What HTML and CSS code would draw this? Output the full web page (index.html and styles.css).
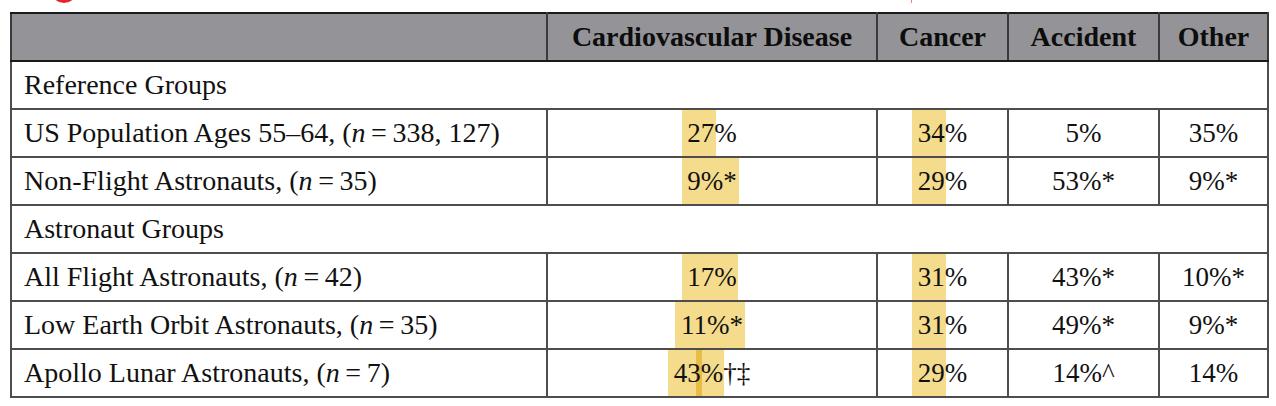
FILE: index.html
```html
<!DOCTYPE html>
<html>
<head>
<meta charset="utf-8">
<link rel="stylesheet" href="styles.css">
</head>
<body>
<div class="page">
  <span class="red-blob"></span>
  <span class="red-tick"></span>
  <table class="data">
    <colgroup>
      <col class="c-label"><col class="c-cvd"><col class="c-cancer"><col class="c-acc"><col class="c-other">
    </colgroup>
    <thead>
      <tr>
        <th></th>
        <th>Cardiovascular Disease</th>
        <th>Cancer</th>
        <th>Accident</th>
        <th>Other</th>
      </tr>
    </thead>
    <tbody>
      <tr class="section"><td colspan="5">Reference Groups</td></tr>
      <tr>
        <td class="label">US Population Ages 55–64, (<i>n</i>&#8201;=&#8201;338, 127)</td>
        <td class="num"><span class="bar" style="left:134px;width:34px"></span><span class="val">27%</span></td>
        <td class="num"><span class="bar" style="left:34px;width:34px"></span><span class="val">34%</span></td>
        <td class="num"><span class="val">5%</span></td>
        <td class="num"><span class="val">35%</span></td>
      </tr>
      <tr>
        <td class="label">Non-Flight Astronauts, (<i>n</i>&#8201;=&#8201;35)</td>
        <td class="num"><span class="bar" style="left:134px;width:57px"></span><span class="val">9%*</span></td>
        <td class="num"><span class="bar" style="left:34px;width:34px"></span><span class="val">29%</span></td>
        <td class="num"><span class="val">53%*</span></td>
        <td class="num"><span class="val">9%*</span></td>
      </tr>
      <tr class="section"><td colspan="5">Astronaut Groups</td></tr>
      <tr>
        <td class="label">All Flight Astronauts, (<i>n</i>&#8201;=&#8201;42)</td>
        <td class="num"><span class="bar" style="left:134px;width:56px"></span><span class="val">17%</span></td>
        <td class="num"><span class="bar" style="left:34px;width:34px"></span><span class="val">31%</span></td>
        <td class="num"><span class="val">43%*</span></td>
        <td class="num"><span class="val">10%*</span></td>
      </tr>
      <tr>
        <td class="label">Low Earth Orbit Astronauts, (<i>n</i>&#8201;=&#8201;35)</td>
        <td class="num"><span class="bar" style="left:127px;width:70px"></span><span class="val">11%*</span></td>
        <td class="num"><span class="bar" style="left:34px;width:34px"></span><span class="val">31%</span></td>
        <td class="num"><span class="val">49%*</span></td>
        <td class="num"><span class="val">9%*</span></td>
      </tr>
      <tr>
        <td class="label">Apollo Lunar Astronauts, (<i>n</i>&#8201;=&#8201;7)</td>
        <td class="num"><span class="bar" style="left:120px;width:56px"></span><span class="bar dark" style="left:148px;width:6px"></span><span class="val">43%†‡</span></td>
        <td class="num"><span class="bar" style="left:34px;width:34px"></span><span class="val">29%</span></td>
        <td class="num"><span class="val">14%^</span></td>
        <td class="num"><span class="val">14%</span></td>
      </tr>
    </tbody>
  </table>
</div>
</body>
</html>
```

FILE: styles.css
```css
html, body {
  margin: 0;
  padding: 0;
  background: #ffffff;
}

.page {
  position: relative;
  width: 1276px;
  height: 406px;
  padding: 12px 0 0 10px;
  box-sizing: border-box;
  font-family: "Liberation Serif", "DejaVu Serif", serif;
  color: #111111;
}

.red-blob {
  position: absolute;
  left: 51px;
  top: -22px;
  width: 26px;
  height: 25px;
  border-radius: 50%;
  background: #e8242a;
}

.red-tick {
  position: absolute;
  left: 911px;
  top: 0;
  width: 1px;
  height: 3px;
  background: #f08080;
}

.data {
  border-collapse: collapse;
  table-layout: fixed;
  width: 1257px;
}

.c-label { width: 536px; }
.c-cvd { width: 330px; }
.c-cancer { width: 131px; }
.c-acc { width: 151px; }
.c-other { width: 109px; }

.data th,
.data td {
  border: 2px solid #4d4d4d;
  height: 46px;
  padding: 0;
  vertical-align: middle;
}

.data thead tr {
  border-top: 2px solid #1a1a1a;
}

.data th {
  background: #949498;
  font-weight: bold;
  font-size: 28px;
  text-align: center;
  color: #0d0d0d;
  border-color: #3a3a3a;
  border-top-color: #1a1a1a;
  border-bottom-color: #1a1a1a;
}

.data td {
  font-size: 28px;
}

.section td,
.data td.label {
  padding-left: 12px;
  text-align: left;
}

.data td.num {
  position: relative;
  text-align: center;
  font-size: 27px;
}

.bar {
  position: absolute;
  top: 0;
  bottom: 0;
  background: #f5dc8d;
}

.bar.dark {
  background: #e9bd45;
}

.val {
  position: relative;
}
```
